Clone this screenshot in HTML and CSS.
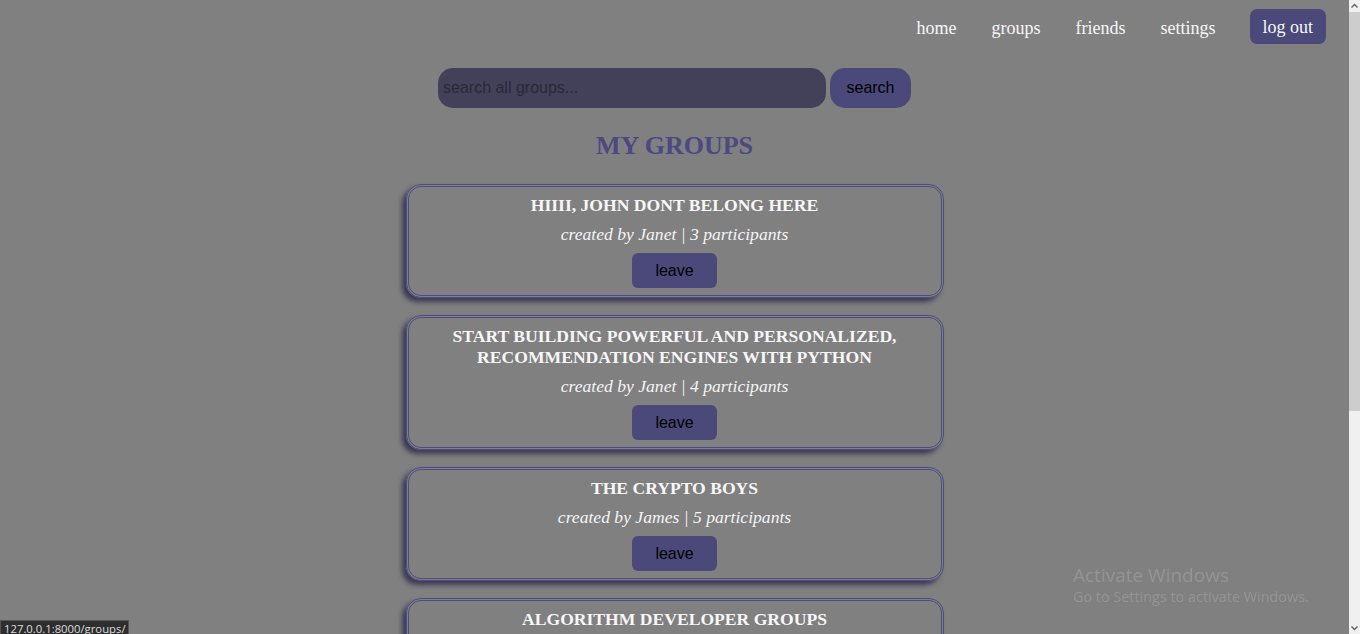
FILE: index.html
```html
<!DOCTYPE html>
<html lang="en">
<head>
<meta charset="utf-8">
<title>groups</title>
<link rel="stylesheet" href="styles.css">
</head>
<body>
<div class="page">
<header class="nav">
  <a class="nav-link" href="#">home</a>
  <a class="nav-link" href="#">groups</a>
  <a class="nav-link" href="#">friends</a>
  <a class="nav-link" href="#">settings</a>
  <a class="nav-btn" href="#">log out</a>
</header>
<main class="main">
  <form class="search">
    <input class="search-input" type="text" placeholder="search all groups...">
    <button class="search-btn" type="button">search</button>
  </form>
  <h1 class="heading">MY GROUPS</h1>
  <section class="list">
    <article class="card">
      <h2 class="card-title">HIIII, JOHN DONT BELONG HERE</h2>
      <p class="card-meta">created by Janet | 3 participants</p>
      <button class="leave" type="button">leave</button>
    </article>
    <article class="card">
      <h2 class="card-title">START BUILDING POWERFUL AND PERSONALIZED, RECOMMENDATION ENGINES WITH PYTHON</h2>
      <p class="card-meta">created by Janet | 4 participants</p>
      <button class="leave" type="button">leave</button>
    </article>
    <article class="card">
      <h2 class="card-title">THE CRYPTO BOYS</h2>
      <p class="card-meta">created by James | 5 participants</p>
      <button class="leave" type="button">leave</button>
    </article>
    <article class="card">
      <h2 class="card-title">ALGORITHM DEVELOPER GROUPS</h2>
      <p class="card-meta">created by James | 2 participants</p>
      <button class="leave" type="button">leave</button>
    </article>
  </section>
</main>
</div>
<aside class="scrollbar" aria-hidden="true">
  <div class="sb-btn">
    <svg width="11" height="12" viewBox="0 0 11 12"><path d="M2.5 7.5 L5.5 4.5 L8.5 7.5" fill="none" stroke="#606060" stroke-width="1.4"/></svg>
  </div>
  <div class="sb-thumb"></div>
  <div class="sb-track"></div>
  <div class="sb-btn">
    <svg width="11" height="12" viewBox="0 0 11 12"><path d="M2.5 4.5 L5.5 7.5 L8.5 4.5" fill="none" stroke="#606060" stroke-width="1.4"/></svg>
  </div>
</aside>
<div class="watermark">
  <div class="wm-title">Activate Windows</div>
  <div class="wm-sub">Go to Settings to activate Windows.</div>
</div>
<div class="status">127.0.0.1:8000/groups/</div>
</body>
</html>
```
FILE: styles.css
```css
html, body {
  margin: 0;
  height: 100%;
  overflow: hidden;
  background: #808080;
}
body {
  display: flex;
  font-family: "Liberation Serif", "Times New Roman", serif;
  color: #f5f5f5;
}
.page {
  flex: 1;
  min-width: 0;
  height: 100vh;
  overflow: hidden;
}
.scrollbar {
  width: 11px;
  height: 100vh;
  display: flex;
  flex-direction: column;
  background: #f0f0f0;
}
.sb-btn {
  height: 12px;
  flex: none;
  background: #f0f0f0;
}
.sb-btn svg {
  display: block;
}
.sb-thumb {
  height: 399px;
  flex: none;
  background: #cdcdcd;
}
.sb-track {
  flex: 1;
  background: #f0f0f0;
}
.nav {
  display: flex;
  justify-content: flex-end;
  align-items: center;
  gap: 35px;
  padding: 9px 23px 0 0;
  height: 35px;
}
.nav-link {
  color: #f7f7f7;
  text-decoration: none;
  font-size: 18px;
  line-height: 20px;
  padding-top: 2px;
}
.nav-btn {
  background: #4a497a;
  color: #f7f7f7;
  text-decoration: none;
  font-size: 18px;
  height: 35px;
  line-height: 37px;
  padding: 0 13px 0 12px;
  border-radius: 7px;
}
.main {
  display: flex;
  flex-direction: column;
  align-items: center;
  padding: 24px 0 0;
}
.search {
  display: flex;
  gap: 4px;
  margin: 0;
}
.search-input {
  box-sizing: border-box;
  width: 388px;
  height: 40px;
  border: none;
  border-radius: 15px;
  background: #434159;
  padding: 0 5px;
  font-family: "Liberation Sans", Arial, sans-serif;
  font-size: 16px;
  color: #222;
  outline: none;
}
.search-input::placeholder {
  color: #29283a;
}
.search-btn {
  width: 81px;
  height: 40px;
  border: none;
  border-radius: 15px;
  background: #4a497a;
  font-family: "Liberation Sans", Arial, sans-serif;
  font-size: 16px;
  color: #000;
  padding: 0;
}
.heading {
  margin: 22px 0 0;
  font-size: 26px;
  line-height: 32px;
  color: #4a4981;
  font-weight: bold;
}
.list {
  display: flex;
  flex-direction: column;
  gap: 17px;
  margin-top: 22px;
}
.card {
  box-sizing: border-box;
  width: 538px;
  border: 3px double #4d4c86;
  border-radius: 15px;
  box-shadow: -4px 4px 5px #3b3a55;
  padding: 8px 30px 7px;
  display: flex;
  flex-direction: column;
  align-items: center;
  text-align: center;
}
.card-title {
  margin: 0 0 8px;
  font-size: 17.6px;
  line-height: 21px;
  font-weight: bold;
  color: #f7f7f7;
}
.card-meta {
  margin: 0 0 8px;
  font-size: 17.6px;
  line-height: 21px;
  font-style: italic;
  color: #f5f5f5;
}
.leave {
  width: 85px;
  height: 35px;
  border: none;
  border-radius: 6px;
  background: #4a497a;
  font-family: "Liberation Sans", Arial, sans-serif;
  font-size: 16px;
  color: #000;
  padding: 0;
}
.watermark {
  position: fixed;
  left: 1073px;
  top: 563px;
  color: #949494;
  font-family: "Open Sans", "Noto Sans", sans-serif;
}
.wm-title {
  font-size: 19px;
  line-height: 24px;
}
.wm-sub {
  font-size: 14.4px;
  line-height: 20px;
}
.status {
  position: fixed;
  left: 0;
  bottom: -4px;
  height: 16px;
  padding: 0 2px 0 3px;
  background: #2e2e2e;
  border: 1px solid #555;
  color: #dcdcdc;
  font-family: "Open Sans", "Noto Sans", sans-serif;
  font-size: 11.3px;
  line-height: 16px;
}
```
